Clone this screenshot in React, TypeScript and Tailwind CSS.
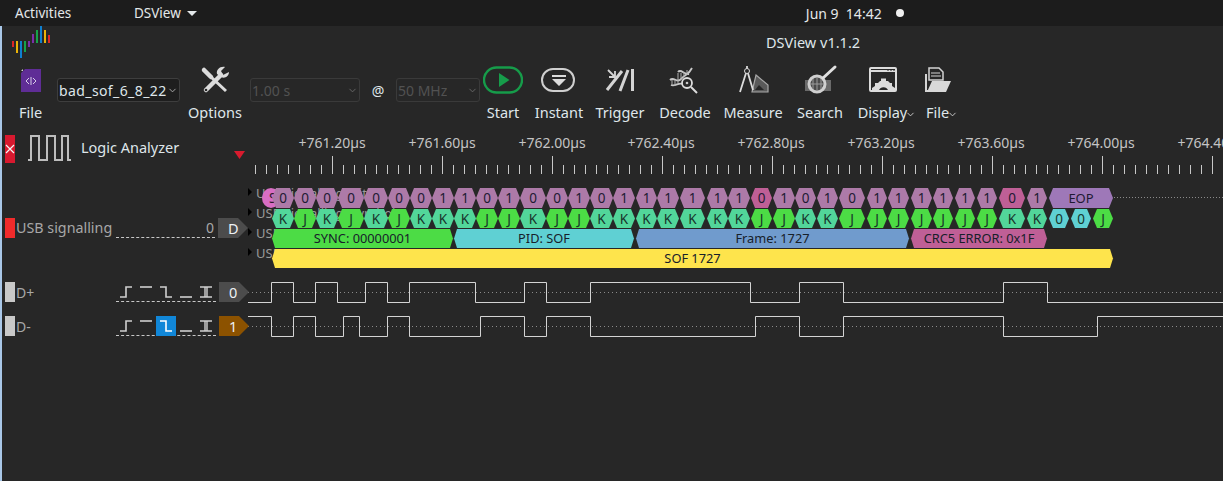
import React from "react";
import { ChevronDown } from "lucide-react";

// cell edges shared by the bits and symbols rows
const cells: [number, number, string, string][] = [
  [272, 294, "0", "K"], [294, 316, "0", "J"], [316, 338, "0", "K"], [338, 364, "0", "J"],
  [364, 388, "0", "K"], [388, 410, "0", "J"], [410, 432, "0", "K"], [432, 454, "1", "K"],
  [454, 476, "1", "K"], [476, 498, "0", "J"], [498, 520, "1", "J"], [520, 546, "0", "K"],
  [546, 568, "0", "J"], [568, 590, "1", "J"], [590, 613, "0", "K"], [613, 635, "1", "K"],
  [636, 657, "1", "K"], [657, 679, "1", "K"], [680, 705, "1", "K"], [707, 728, "1", "K"],
  [728, 750, "1", "K"], [751, 772, "0", "J"], [773, 795, "1", "J"], [795, 816, "0", "K"],
  [817, 838, "1", "K"], [839, 865, "0", "J"], [867, 887, "1", "J"], [888, 909, "1", "J"],
  [911, 932, "1", "J"], [933, 953, "1", "J"], [955, 975, "1", "J"], [977, 997, "1", "J"],
  [999, 1025, "0", "K"], [1027, 1047, "1", "K"],
];

const plusEdges = [271.5, 293.5, 315.5, 337.5, 365.5, 387.5, 409.5, 475.5, 524.5, 546.5, 590.5, 750.5, 799.5, 843.5, 1003.5, 1047.5];
const minusEdges = [271.5, 293.5, 315.5, 343.5, 359.5, 387.5, 409.5, 480.5, 524.5, 546.5, 590.5, 755.5, 799.5, 843.5, 1003.5, 1097.5];

const rulerLabels = [
  [332, "+761.20µs"], [442, "+761.60µs"], [552, "+762.00µs"], [661, "+762.40µs"], [771, "+762.80µs"],
  [881, "+763.20µs"], [991, "+763.60µs"], [1101, "+764.00µs"], [1211, "+764.40µs"],
] as const;

const hex = (a: number, b: number, top: number, bottom: number, tip: number) => {
  const mid = (top + bottom) / 2;
  return `${a},${mid} ${a + tip},${top} ${b - tip},${top} ${b},${mid} ${b - tip},${bottom} ${a + tip},${bottom}`;
};

const wavePath = (edges: number[], startHigh: boolean, high: number, low: number) => {
  let level = startHigh;
  let d = `M248 ${level ? high : low}`;
  edges.forEach((x) => {
    level = !level;
    d += ` H${x} V${level ? high : low}`;
  });
  return d + " H1223";
};

function Segment({ a, b, y, color, label }: { a: number; b: number; y: number; color: string; label: string }) {
  return (
    <g>
      <polygon points={hex(a, b, y, y + 19, 3)} fill={color} />
      <text x={(a + b) / 2} y={y + 14} textAnchor="middle" fontSize={12.8} fill="#17202a">{label}</text>
    </g>
  );
}

function Timeline() {
  const ticks: number[] = [];
  for (let x = 255; x < 1223; x += 11) ticks.push(x);
  return (
    <svg viewBox="248 130 975 215" className="h-[215px] w-[975px] shrink-0">
      {rulerLabels.map(([x, t]) => (
        <text key={x} x={x} y={148} textAnchor="middle" fontSize={14} fill="#c4c4c4">{t}</text>
      ))}
      {ticks.map((x, i) => (
        <line key={x} x1={x + 0.5} x2={x + 0.5} y1={(i - 7) % 10 === 0 ? 156 : 165} y2={174} stroke="#c8c8c8" />
      ))}

      {[192, 212, 232, 252].map((y) => (
        <polygon key={y} points={`248,${y - 4} 252,${y} 248,${y + 4}`} fill="#000" />
      ))}
      <text x={256} y={198} fontSize={13} fill="#9a9a9a">USB signalling: Bits</text>
      <text x={256} y={218} fontSize={13} fill="#9a9a9a">USB signalling: Symbols</text>
      <text x={256} y={238} fontSize={13} fill="#9a9a9a">USB</text>
      <text x={256} y={258} fontSize={13} fill="#9a9a9a">USB</text>

      <ellipse cx={271} cy={198} rx={9} ry={10} fill="#d86ec4" />
      <text x={269} y={203} fontSize={13.5} fill="#2a1a30">S</text>

      {cells.map(([a, b, bit, sym], i) => (
        <g key={a}>
          <polygon points={hex(a, b, 188, 208, 4)} fill={i === 21 || i === 32 ? "#bf5f96" : "#ad7aa8"} />
          <text x={(a + b) / 2} y={203} textAnchor="middle" fontSize={13.5} fill="#1e1a33">{bit}</text>
          <polygon points={hex(a, b, 209, 228, 4)} fill={sym === "J" ? "#4cdc45" : "#52d69a"} />
          <text x={(a + b) / 2} y={223.500} textAnchor="middle" fontSize={13.5} fill="#17332a">{sym}</text>
        </g>
      ))}
      <polygon points={hex(1049, 1113, 188, 208, 4)} fill="#9e78b8" />
      <text x={1081} y={203} textAnchor="middle" fontSize={13} fill="#1e1a33">EOP</text>
      <line x1={1114} x2={1223} y1={197.5} y2={197.5} stroke="#8a8a8a" strokeDasharray="1 2" />
      {[[1049, 1069, "0", "#5fd0d3"], [1071, 1091, "0", "#5fd0d3"], [1093, 1113, "J", "#4cdc45"]].map(([a, b, t, c]) => (
        <g key={a as number}>
          <polygon points={hex(a as number, b as number, 209, 228, 4)} fill={c as string} />
          <text x={((a as number) + (b as number)) / 2} y={223.500} textAnchor="middle" fontSize={13.5} fill="#17332a">{t}</text>
        </g>
      ))}

      <Segment a={272} b={453} y={229} color="#4cdc45" label="SYNC: 00000001" />
      <Segment a={454} b={634} y={229} color="#5fd0d3" label="PID: SOF" />
      <Segment a={636} b={909} y={229} color="#709bcd" label="Frame: 1727" />
      <Segment a={911} b={1047} y={229} color="#bf5f96" label="CRC5 ERROR: 0x1F" />
      <Segment a={272} b={1113} y={249} color="#fee44c" label="SOF 1727" />

      <line x1={248} x2={1223} y1={292.5} y2={292.5} stroke="#8a8a8a" strokeDasharray="1 3" />
      <line x1={248} x2={1223} y1={326.5} y2={326.5} stroke="#8a8a8a" strokeDasharray="1 3" />
      <path d={wavePath(plusEdges, false, 282.5, 302.5)} fill="none" stroke="#d4d4d4" />
      <path d={wavePath(minusEdges, true, 316.5, 336.5)} fill="none" stroke="#d4d4d4" />
    </svg>
  );
}

function Logo() {
  const low = [[12, 41, 47, "#dc2626"], [16, 41, 53, "#eab308"], [20, 41, 58, "#0f80d0"], [24, 41, 52, "#16a34a"], [28, 41, 47, "#7b2fa8"]] as const;
  const high = [[32, 34, 43, "#7b2fa8"], [36, 30, 43, "#16a34a"], [40, 26, 43, "#0f80d0"], [44, 30, 43, "#eab308"], [48, 35, 43, "#dc2626"]] as const;
  return (
    <svg viewBox="12 26 40 34" className="ml-[10px] h-[34px] w-[40px] shrink-0">
      {[...low, ...high].map(([x, a, b, c]) => (
        <rect key={x} x={x} y={a} width={2} height={b - a} fill={c} />
      ))}
    </svg>
  );
}

function Icon({ cx, children }: { cx: number; children: React.ReactNode }) {
  return (
    <svg viewBox={`${cx - 20} 62 40 36`} className="h-[36px] w-[40px] shrink-0">
      {children}
    </svg>
  );
}

function ToolItem({ width, label, cx, caret, children }: { width: string; label: string; cx: number; caret?: boolean; children: React.ReactNode }) {
  return (
    <div className={`flex shrink-0 flex-col items-center pt-[2px] ${width}`}>
      <Icon cx={cx}>{children}</Icon>
      <div className={`mt-[4px] flex items-center text-[14.5px] leading-[20px] text-[#dfe6ea] ${caret ? "pl-[4px]" : ""}`}>
        {label}
        {caret && <ChevronDown className="-ml-[2px] mt-[5px] h-[11px] w-[11px] text-[#cfcfcf]" />}
      </div>
    </div>
  );
}

function Combo({ width, text, disabled }: { width: string; text: string; disabled?: boolean }) {
  return (
    <div className={`mt-[18px] flex h-[24px] shrink-0 items-center justify-between rounded-[3px] border pl-[1px] pr-[1px] text-[14px] ${width} ${disabled ? "border-[#3a3a3a] text-[#525252]" : "border-[#3e3e3e] bg-[#1e1e1e] tracking-[0.4px] text-[#dfe6ea]"}`}>
      <span className="overflow-hidden whitespace-nowrap">{text}</span>
      <ChevronDown className={`h-[11px] w-[11px] shrink-0 ${disabled ? "text-[#6a6a6a]" : "text-[#b0b0b0]"}`} />
    </div>
  );
}

function Toolbar() {
  return (
    <div className="flex h-[70px] pl-[2px]">
      <ToolItem width="w-[53px]" label="File" cx={31}>
        <path d="M25 69H41V92H21V73Z" fill="#5f2d96" />
        <path d="M21 71L23 69V71Z" fill="#cfcfcf" />
        <path d="M29 78L26 81L29 84M33 78L36 81L33 84M31 77V85" fill="none" stroke="#d8cfe8" strokeWidth={1} />
      </ToolItem>
      <Combo width="w-[123px]" text="bad_sof_6_8_22" />
      <ToolItem width="w-[70px]" label="Options" cx={215}>
        <path d="M204 70L211 77" stroke="#dcdcdc" strokeWidth={4.5} strokeLinecap="round" />
        <path d="M211 77L226 91" stroke="#dcdcdc" strokeWidth={3} />
        <path d="M206 90L221 75" stroke="#dcdcdc" strokeWidth={4.5} strokeLinecap="round" />
        <path d="M225 67L221 71L223 75L227 73L229 72C229 76 225 79 221 77L217 74C216 70 220 66 225 67Z" fill="#dcdcdc" />
        <circle cx={206} cy={90} r={1.3} fill="#272727" />
      </ToolItem>
      <Combo width="w-[110px]" text="1.00 s" disabled />
      <div className="w-[36px] shrink-0 pt-[20px] text-center text-[14px] text-[#dfe6ea]">@</div>
      <Combo width="w-[84px]" text="50 MHz" disabled />
      <ToolItem width="w-[46px]" label="Start" cx={503}>
        <rect x={484} y={67.5} width={38} height={25} rx={12.5} fill="none" stroke="#169c4a" strokeWidth={2.4} />
        <path d="M499 73L509.500 80L499 87Z" fill="#169c4a" />
      </ToolItem>
      <ToolItem width="w-[66px]" label="Instant" cx={559}>
        <rect x={542} y={69} width={32} height={22} rx={11} fill="none" stroke="#cfcfcf" strokeWidth={2} />
        <path d="M552 75H566V77H552ZM552 79H566L559 86Z" fill="#dcdcdc" />
      </ToolItem>
      <ToolItem width="w-[56px]" label="Trigger" cx={620}>
        <path d="M608 70L615 77M615 71V77H609" fill="none" stroke="#d4d4d4" strokeWidth={1.8} />
        <path d="M607 90L622 71M620 91L628 70" stroke="#d4d4d4" strokeWidth={3} />
        <path d="M632.500 69V91" stroke="#d4d4d4" strokeWidth={3} />
      </ToolItem>
      <ToolItem width="w-[74px]" label="Decode" cx={685}>
        <path d="M670 80C674 76 677 84 681 79C685 74 688 76 692 68" fill="none" stroke="#c8c8c8" strokeWidth={1.8} />
        <path d="M671 85C675 87 679 82 682 84M678 72C681 68 684 75 689 74" fill="none" stroke="#c8c8c8" strokeWidth={1.8} />
        <path d="M672 80V85M675 80V86M678 73V83M681 73V80M684 72V77M687 70V75" stroke="#b0b0b0" />
        <circle cx={687} cy={83} r={5} fill="#272727" stroke="#dcdcdc" strokeWidth={1.8} />
        <path d="M691 87L697 93" stroke="#dcdcdc" strokeWidth={2} />
        <circle cx={687} cy={83} r={1.3} fill="#c8c8c8" />
      </ToolItem>
      <ToolItem width="w-[62px]" label="Measure" cx={753}>
        <path d="M756 75L768 85V92H752Z" fill="#5a5a5a" stroke="#a8a8a8" strokeWidth={1.2} />
        <path d="M759 85L764 90H755Z" fill="#272727" />
        <path d="M747 66V70M747 70L740 92M747 70L753 90" fill="none" stroke="#dcdcdc" strokeWidth={1.8} />
        <circle cx={747} cy={71} r={2.5} fill="#272727" stroke="#dcdcdc" />
      </ToolItem>
      <ToolItem width="w-[72px]" label="Search" cx={820}>
        <rect x={805} y={80} width={26} height={11} fill="#6a6a6a" />
        <circle cx={817} cy={84} r={8} fill="#4a4a4a" stroke="#cfcfcf" strokeWidth={3} />
        <path d="M813 79V89M817 78V90M821 79V89M810 84H824" stroke="#9a9a9a" />
        <path d="M823 78L835 67" stroke="#e0e0e0" strokeWidth={3} strokeLinecap="round" />
      </ToolItem>
      <ToolItem width="w-[58px]" label="Display" cx={885} caret>
        <rect x={870} y={68} width={26} height={23} rx={1} fill="none" stroke="#dcdcdc" strokeWidth={2} />
        <path d="M870 71H896" stroke="#dcdcdc" strokeWidth={2} />
        <path d="M872 91V88L875 86L875 83L878 83L880 81H881V78.500H886V81L888 81L890 83L892 83V86L895 88V91H888C888 86 879 86 879 91Z" fill="#dcdcdc" />
        <path d="M887 70H889M890 70H892M893 70H895" stroke="#272727" strokeWidth={1} />
      </ToolItem>
      <ToolItem width="w-[52px]" label="File" cx={940} caret>
        <path d="M926 74V91H932" fill="none" stroke="#d4d4d4" strokeWidth={2} />
        <path d="M929 68H939L943 72V80H929Z" fill="#272727" stroke="#d4d4d4" strokeWidth={1.500} />
        <path d="M931 73H940M931 76H941" stroke="#d4d4d4" />
        <path d="M932 81H951L946 92H927Z" fill="#d8d8d8" />
      </ToolItem>
    </div>
  );
}

function EdgeIcons({ active }: { active?: boolean }) {
  const stroke = "#d0d0d0";
  return (
    <div className="flex h-[20px] w-[100px] items-center border-b border-dashed border-[#c8c8c8]">
      <svg viewBox="115 0 100 20" className="h-[20px] w-[100px]">
        {active && <rect x={155} y={0} width={20} height={20} fill="#1187d8" />}
        <path d="M119 15H125V5H131" fill="none" stroke={stroke} strokeWidth={1.6} />
        <path d="M139 5H151" fill="none" stroke={stroke} strokeWidth={1.6} />
        <path d="M159 5H165V15H171" fill="none" stroke={active ? "#fff" : stroke} strokeWidth={1.6} />
        <path d="M179 15H191" fill="none" stroke={stroke} strokeWidth={1.6} />
        <path d="M199 5H211M199 15H211M204 5V15M206 5V15" fill="none" stroke={stroke} strokeWidth={1.4} />
      </svg>
    </div>
  );
}

function Tag({ text, color }: { text: string; color: string }) {
  return (
    <div className="relative ml-[3px] h-[20px] w-[30px] shrink-0">
      <svg viewBox="0 0 30 20" className="h-[20px] w-[30px]">
        <polygon points="0,0 20,0 30,10 20,20 0,20" fill={color} />
      </svg>
      <span className="absolute left-[10px] top-0 text-[14.5px] leading-[20px] text-[#eef2f5]">{text}</span>
    </div>
  );
}

function ChannelRow({ name, swatch, tag, tagColor, active, marginTop }: { name: string; swatch: string; tag: string; tagColor: string; active?: boolean; marginTop: string }) {
  return (
    <div className={`flex h-[20px] items-center ${marginTop}`}>
      <div className={`h-[20px] w-[10px] shrink-0 ${swatch}`} />
      <div className="ml-[1px] w-[100px] shrink-0 text-[14px] text-[#a8a8a8]">{name}</div>
      <EdgeIcons active={active} />
      <Tag text={tag} color={tagColor} />
    </div>
  );
}

function Sidebar() {
  return (
    <div className="flex w-[246px] shrink-0 flex-col pl-[3px]">
      <div className="relative mt-[5px] flex h-[28px] items-center">
        <svg viewBox="0 0 10 28" className="h-[28px] w-[10px] bg-[#d8192f]">
          <path d="M1 10L9 18M9 10L1 18" stroke="#f4f4f4" strokeWidth={1.2} />
        </svg>
        <svg viewBox="0 0 44 28" className="ml-[13px] h-[28px] w-[44px]">
          <path d="M0 25H3V1H11V25H19V1H27V25H34V1H40V25H43" fill="none" stroke="#bdbdbd" strokeWidth={2} />
        </svg>
        <span className="ml-[9px] -mt-[2px] text-[14.5px] text-[#dfe6ea]">Logic Analyzer</span>
        <svg viewBox="0 0 11 8" className="absolute left-[229px] top-[16px] h-[8px] w-[11px]">
          <polygon points="0,0 11,0 5.5,8" fill="#d81b2e" />
        </svg>
      </div>
      <div className="mt-[55px] flex h-[20px] items-center">
        <div className="h-[20px] w-[10px] shrink-0 bg-[#f02b2b]" />
        <div className="ml-[1px] w-[100px] shrink-0 whitespace-nowrap text-[14.3px] text-[#a8a8a8]">USB signalling</div>
        <div className="h-[20px] w-[100px] border-b border-dashed border-[#c8c8c8] pr-[1px] text-right text-[14px] leading-[20px] text-[#a8a8a8]">0</div>
        <Tag text="D" color="#4c4c4c" />
      </div>
      <ChannelRow name="D+" swatch="bg-[#c8c8c8]" tag="0" tagColor="#4c4c4c" marginTop="mt-[44px]" />
      <ChannelRow name="D-" swatch="bg-[#c8c8c8]" tag="1" tagColor="#8c5200" active marginTop="mt-[14px]" />
    </div>
  );
}

export default function App() {
  return (
    <div className="flex h-[481px] w-[1223px] flex-col overflow-hidden bg-[#272727] font-['Noto_Sans',sans-serif]">
      <div className="flex h-[26px] shrink-0 items-center bg-[#1c1c1c] text-[13.5px] text-[#e4e8ea]">
        <span className="ml-[15px] w-[119px]">Activities</span>
        <span>DSView</span>
        <span className="ml-[6px] h-0 w-0 border-x-[5px] border-t-[5px] border-x-transparent border-t-[#e4e8ea]" />
        <span className="ml-[609px] whitespace-pre text-[14px]">Jun 9  14:42</span>
        <span className="ml-[14px] h-[8px] w-[8px] rounded-full bg-[#f0f0f0]" />
      </div>
      <div className="flex min-h-0 flex-1 flex-col border-l-2 border-[#a9c7e8]">
        <div className="flex h-[34px] shrink-0 items-center">
          <Logo />
          <span className="ml-[714px] text-[14.5px] text-[#dfe6ea]">DSView v1.1.2</span>
        </div>
        <Toolbar />
        <div className="flex">
          <Sidebar />
          <Timeline />
        </div>
      </div>
    </div>
  );
}
